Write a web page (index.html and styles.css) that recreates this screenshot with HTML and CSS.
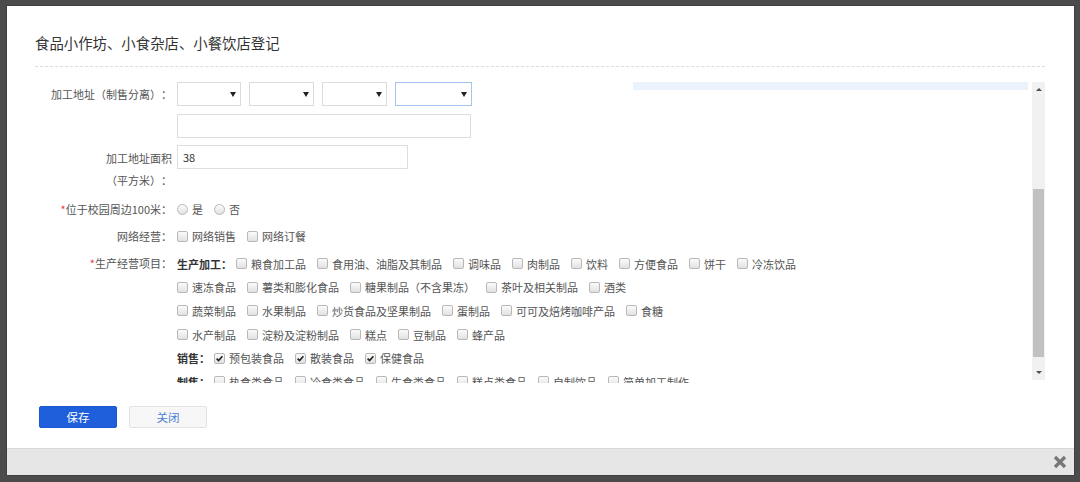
FILE: index.html
```html
<!DOCTYPE html>
<html lang="zh-CN">
<head>
<meta charset="utf-8">
<title>食品小作坊、小食杂店、小餐饮店登记</title>
<link rel="stylesheet" href="styles.css">
</head>
<body>
<div class="dialog">
  <div class="dialog-head">
    <h1 class="title">食品小作坊、小食杂店、小餐饮店登记</h1>
  </div>
  <div class="dialog-body">
    <div class="form">
      <div class="row row-addr">
        <div class="label">加工地址（制售分离）：</div>
        <div class="field selects">
          <div class="select s1"><span class="caret"></span></div>
          <div class="select s2"><span class="caret"></span></div>
          <div class="select s2"><span class="caret"></span></div>
          <div class="select s3 focus"><span class="caret"></span></div>
        </div>
        <div class="hint-bar"></div>
      </div>
      <div class="row row-addr2">
        <div class="label"></div>
        <div class="field"><div class="input input-long"></div></div>
      </div>
      <div class="row row-area">
        <div class="label label-2l">加工地址面积<br>（平方米）：</div>
        <div class="field"><div class="input input-mid">38</div></div>
      </div>
      <div class="row row-line">
        <div class="label"><span class="req">*</span>位于校园周边100米：</div>
        <div class="field opts">
          <span class="opt"><span class="cb radio"></span>是</span>
          <span class="opt"><span class="cb radio"></span>否</span>
        </div>
      </div>
      <div class="row row-line row-net">
        <div class="label">网络经营：</div>
        <div class="field opts">
          <span class="opt"><span class="cb"></span>网络销售</span>
          <span class="opt"><span class="cb"></span>网络订餐</span>
        </div>
      </div>
      <div class="row row-prod">
        <div class="label label-prod"><span class="req">*</span>生产经营项目：</div>
        <div class="field prod">
          <div class="opts pline">
            <span class="grp">生产加工：</span>
            <span class="opt"><span class="cb"></span>粮食加工品</span>
            <span class="opt"><span class="cb"></span>食用油、油脂及其制品</span>
            <span class="opt"><span class="cb"></span>调味品</span>
            <span class="opt"><span class="cb"></span>肉制品</span>
            <span class="opt"><span class="cb"></span>饮料</span>
            <span class="opt"><span class="cb"></span>方便食品</span>
            <span class="opt"><span class="cb"></span>饼干</span>
            <span class="opt"><span class="cb"></span>冷冻饮品</span>
          </div>
          <div class="opts pline">
            <span class="opt"><span class="cb"></span>速冻食品</span>
            <span class="opt"><span class="cb"></span>薯类和膨化食品</span>
            <span class="opt"><span class="cb"></span>糖果制品（不含果冻）</span>
            <span class="opt"><span class="cb"></span>茶叶及相关制品</span>
            <span class="opt"><span class="cb"></span>酒类</span>
          </div>
          <div class="opts pline">
            <span class="opt"><span class="cb"></span>蔬菜制品</span>
            <span class="opt"><span class="cb"></span>水果制品</span>
            <span class="opt"><span class="cb"></span>炒货食品及坚果制品</span>
            <span class="opt"><span class="cb"></span>蛋制品</span>
            <span class="opt"><span class="cb"></span>可可及焙烤咖啡产品</span>
            <span class="opt"><span class="cb"></span>食糖</span>
          </div>
          <div class="opts pline">
            <span class="opt"><span class="cb"></span>水产制品</span>
            <span class="opt"><span class="cb"></span>淀粉及淀粉制品</span>
            <span class="opt"><span class="cb"></span>糕点</span>
            <span class="opt"><span class="cb"></span>豆制品</span>
            <span class="opt"><span class="cb"></span>蜂产品</span>
          </div>
          <div class="opts pline">
            <span class="grp">销售：</span>
            <span class="opt"><span class="cb"><svg class="tick" viewBox="0 0 9 9"><path d="M1.6 4.6 L3.6 6.6 L7.4 2.2"/></svg></span>预包装食品</span>
            <span class="opt"><span class="cb"><svg class="tick" viewBox="0 0 9 9"><path d="M1.6 4.6 L3.6 6.6 L7.4 2.2"/></svg></span>散装食品</span>
            <span class="opt"><span class="cb"><svg class="tick" viewBox="0 0 9 9"><path d="M1.6 4.6 L3.6 6.6 L7.4 2.2"/></svg></span>保健食品</span>
          </div>
          <div class="opts pline">
            <span class="grp">制售：</span>
            <span class="opt"><span class="cb"></span>热食类食品</span>
            <span class="opt"><span class="cb"></span>冷食类食品</span>
            <span class="opt"><span class="cb"></span>生食类食品</span>
            <span class="opt"><span class="cb"></span>糕点类食品</span>
            <span class="opt"><span class="cb"></span>自制饮品</span>
            <span class="opt"><span class="cb"></span>简单加工制作</span>
          </div>
        </div>
      </div>
    </div>
    <div class="scrollbar">
      <div class="sb-btn"><span class="sb-up"></span></div>
      <div class="sb-space"></div>
      <div class="sb-thumb"></div>
      <div class="sb-gap"></div>
      <div class="sb-btn"><span class="sb-down"></span></div>
    </div>
  </div>
  <div class="actions">
    <button class="btn btn-primary">保存</button>
    <button class="btn btn-default">关闭</button>
  </div>
  <div class="dialog-foot">
    <svg class="close-x" viewBox="0 0 14 14" width="14" height="14"><path d="M2 2 L12 12 M12 2 L2 12"/></svg>
  </div>
</div>
</body>
</html>
```
FILE: styles.css
```css
* { box-sizing: border-box; }
html, body { margin: 0; height: 100%; }
body {
  background: #4b4b4b;
  padding: 6px 0 0 7px;
  overflow: hidden;
  font-family: "Noto Sans CJK SC", "Microsoft YaHei", sans-serif;
  font-size: 11px;
  color: #555;
  text-spacing-trim: space-all;
}
.dialog {
  width: 1067px;
  height: 469px;
  background: #fff;
  display: flex;
  flex-direction: column;
  box-shadow: 0 0 0 1px #3f3f3f;
}
.dialog-head {
  margin: 0 29px 0 28px;
  padding: 27px 0 13px;
  border-bottom: 1px dashed #dcdcdc;
}
.title {
  margin: 0;
  font-size: 14.4px;
  line-height: 20px;
  font-weight: normal;
  color: #333;
}
.dialog-body {
  display: flex;
  height: 303px;
  margin: 13px 29px 0 28px;
  overflow: hidden;
}
.form {
  flex: 1;
  min-width: 0;
  padding-top: 2px;
}
.row { display: flex; gap: 5px; }
.label {
  width: 137px;
  flex: none;
  text-align: right;
  line-height: 24px;
  white-space: nowrap;
  color: #555;
}
.req { color: #e4393c; }
.field { display: flex; }
.selects { gap: 8px; }
.select {
  height: 24px;
  border: 1px solid #dcdcdc;
  display: flex;
  align-items: center;
  justify-content: flex-end;
  padding-right: 4px;
  background: #fff;
}
.s1 { width: 64px; }
.s2 { width: 65px; }
.s3 { width: 77px; }
.focus { border-color: #a3c4ee; }
.caret {
  width: 0; height: 0;
  border-left: 3px solid transparent;
  border-right: 3px solid transparent;
  border-top: 5px solid #222;
}
.hint-bar {
  margin-left: auto;
  width: 395px;
  height: 8px;
  background: #eaf3fb;
}
.row-addr2 { margin-top: 8px; }
.input {
  height: 24px;
  border: 1px solid #dedede;
  padding-left: 5px;
  line-height: 22px;
  color: #333;
}
.input-long { width: 294px; }
.input-mid { width: 231px; }
.row-area { margin-top: 7px; }
.label-2l { line-height: 22px; padding-top: 2px; }
.row-line { margin-top: 7px; height: 22px; }
.row-line .label { line-height: 22px; }
.row-net { margin-top: 5px; }
.opts { display: flex; align-items: center; }
.opt {
  display: inline-flex;
  align-items: center;
  margin-right: 11px;
  white-space: nowrap;
}
.cb {
  width: 11px;
  height: 11px;
  flex: none;
  margin-right: 4px;
  border: 1px solid #b8b8b8;
  border-radius: 2px;
  background: linear-gradient(#fbfbfb, #e1e1e1);
  display: flex;
  align-items: center;
  justify-content: center;
}
.radio { border-radius: 50%; }
.tick { width: 9px; height: 9px; }
.tick path { fill: none; stroke: #222; stroke-width: 1.6; }
.grp { font-weight: bold; color: #333; margin-right: 4px; white-space: nowrap; }
.row-prod { margin-top: 5px; }
.label-prod { line-height: 23.6px; }
.prod { flex-direction: column; }
.pline { height: 23.6px; }
.scrollbar {
  width: 13px;
  height: 298px;
  margin: 2px 0 0 4px;
  background: #f1f1f1;
  display: flex;
  flex-direction: column;
  align-items: center;
  flex: none;
}
.sb-btn {
  height: 15px;
  width: 100%;
  display: flex;
  align-items: center;
  justify-content: center;
}
.sb-up {
  width: 0; height: 0;
  border-left: 3px solid transparent;
  border-right: 3px solid transparent;
  border-bottom: 3px solid #505050;
}
.sb-down {
  width: 0; height: 0;
  border-left: 3px solid transparent;
  border-right: 3px solid transparent;
  border-top: 3px solid #505050;
}
.sb-space { height: 92px; }
.sb-thumb { width: 11px; height: 168px; background: #c1c1c1; }
.sb-gap { height: 8px; }
.actions {
  display: flex;
  gap: 12px;
  margin: 23px 0 0 32px;
}
.btn {
  width: 78px;
  height: 22px;
  padding: 0;
  border: 1px solid;
  border-radius: 2px;
  font-family: inherit;
  font-size: 11.5px;
  line-height: 20px;
}
.btn-primary { background: #1f5fdc; border-color: #1b57cf; color: #fff; }
.btn-default { background: #f7f7f7; border-color: #e3e3e3; color: #4a7fd6; }
.dialog-foot {
  margin-top: auto;
  height: 27px;
  background: #e6e6e6;
  border-top: 1px solid #d7d7d7;
  display: flex;
  justify-content: flex-end;
  align-items: center;
  padding-right: 7px;
}
.close-x path { stroke: #777; stroke-width: 3.2; fill: none; }
```
